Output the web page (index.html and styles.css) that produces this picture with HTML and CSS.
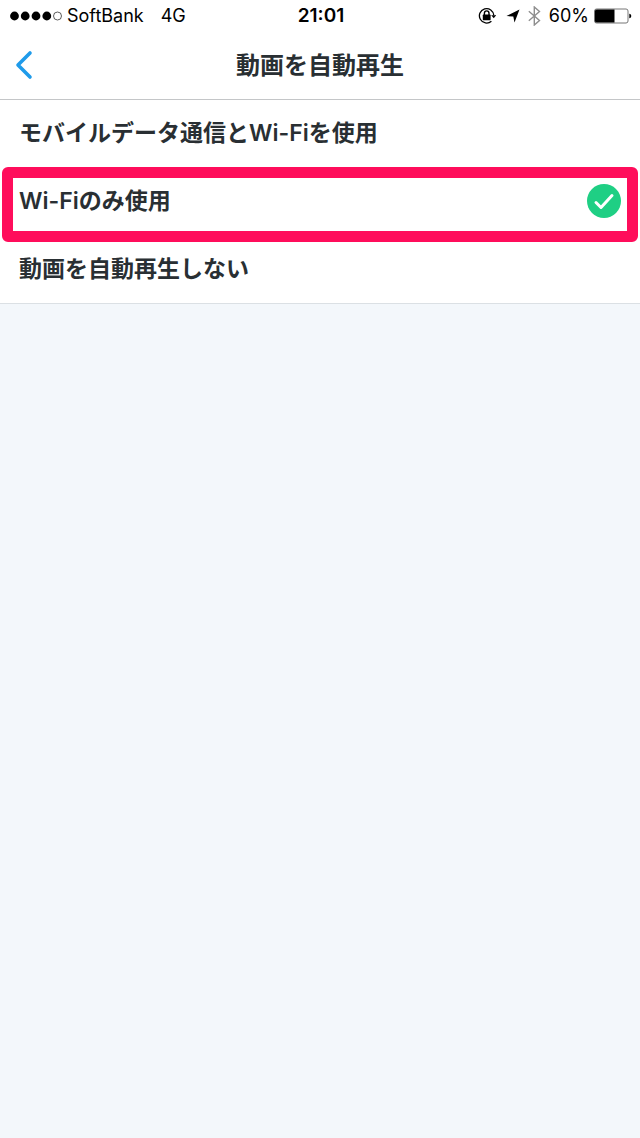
FILE: index.html
```html
<!DOCTYPE html>
<html lang="ja">
<head>
    <meta charset="UTF-8">
    <meta name="viewport" content="width=device-width">
    <title>動画を自動再生</title>
    <link rel="stylesheet" href="styles.css">
</head>
<body>
<div class="status-bar">
    <div class="status-left">
        <svg class="signal" width="52" height="10" viewBox="0 0 52 10">
            <circle cx="4.5" cy="5" r="4.4"/>
            <circle cx="15.2" cy="5" r="4.4"/>
            <circle cx="26" cy="5" r="4.4"/>
            <circle cx="36.8" cy="5" r="4.4"/>
            <circle cx="47.5" cy="5" r="4" fill="none" stroke="#333" stroke-width=".8"/>
        </svg>
        <span class="carrier">SoftBank</span>
        <span>4G</span>
    </div>
    <div class="time">21:01</div>
    <div class="status-right">
        <svg class="lock" width="18" height="18" viewBox="0 0 18 18">
            <path d="M13.4 14.2A7.2 7.2 0 1 1 15.8 8.400" fill="none" stroke="#000" stroke-width="1.3"/>
            <path d="M13.200 8.200h5l-2.500 3z"/>
            <rect x="4.800" y="7.600" width="7.800" height="5.600" rx=".6"/>
            <path d="M6.400 8.200V6.200a2.300 2.300 0 0 1 4.600 0v2" fill="none" stroke="#000" stroke-width="1.4"/>
        </svg>
        <svg class="location" width="14" height="14" viewBox="0 0 14 14">
            <path d="M13.500.5 8.500 13.500 7.300 7.600.5 7z"/>
        </svg>
        <svg class="bluetooth" width="13" height="20" viewBox="0 0 13 20">
            <path d="M.8 5.300 11.500 14.400 6.300 19V1l5.200 4.600L.8 14.700" fill="none" stroke="#8e8e8e" stroke-width="1.4"/>
        </svg>
        <span>60%</span>
        <svg class="battery" width="38" height="16" viewBox="0 0 38 16">
            <rect x=".5" y="1" width="33.5" height="14" rx="2" fill="#fff" stroke="#777"/>
            <path d="M2.500 1.500H20.500v13H2.500a1.500 1.500 0 0 1-1.500-1.500V3a1.500 1.500 0 0 1 1.500-1.500z"/>
            <path d="M35.300 5.700c2.600.5 2.600 4.100 0 4.600z"/>
        </svg>
    </div>
</div>
<header class="nav">
    <button class="back" type="button" aria-label="戻る">
        <svg width="18" height="30" viewBox="0 0 18 30">
            <path d="M15 3 3 15l12 12" fill="none" stroke="#1f9bea" stroke-width="3.6" stroke-linecap="round" stroke-linejoin="round"/>
        </svg>
    </button>
    <h1>動画を自動再生</h1>
</header>
<main class="options">
    <label class="option">
        <span>モバイルデータ通信とWi-Fiを使用</span>
        <span class="check">
            <input type="radio" name="autoplay" value="all">
            <svg width="34" height="34" viewBox="0 0 34 34"><path d="m9 18.500 5 5L25 11.500"/></svg>
        </span>
    </label>
    <label class="option marked">
        <span>Wi-Fiのみ使用</span>
        <span class="check">
            <input type="radio" name="autoplay" value="wifi" checked>
            <svg width="34" height="34" viewBox="0 0 34 34"><path d="m9 18.500 5 5L25 11.500"/></svg>
        </span>
    </label>
    <label class="option">
        <span>動画を自動再生しない</span>
        <span class="check">
            <input type="radio" name="autoplay" value="off">
            <svg width="34" height="34" viewBox="0 0 34 34"><path d="m9 18.500 5 5L25 11.500"/></svg>
        </span>
    </label>
</main>
</body>
</html>
```
FILE: styles.css
```css
*{
    box-sizing: border-box;
}
body{
    margin: 0;
    background-color: #f3f7fb;
    color: #292f33;
    font-family: Inter, "Noto Sans CJK JP", sans-serif;
}
svg{
    display: block;
    flex: none;
}
.status-bar{
    display: grid;
    grid-template-columns: 1fr auto 1fr;
    align-items: center;
    height: 32px;
    padding: 0 8px 0 10px;
    background-color: #fff;
    color: #000;
    font-size: 18px;
    line-height: 32px;
}
.status-left,
.status-right{
    display: flex;
    align-items: center;
}
.status-right{
    justify-content: flex-end;
}
.carrier{
    margin: 0 17px 0 5px;
}
.time{
    font-size: 19px;
    font-weight: 600;
}
.location{
    margin: 0 8px 0 10px;
}
.bluetooth{
    margin-right: 8px;
}
.battery{
    margin-left: 5px;
}
.nav{
    display: grid;
    grid-template-columns: 48px 1fr 48px;
    align-items: center;
    height: 67px;
    background-color: #fff;
}
.back{
    display: flex;
    padding: 0 0 2px 15px;
    border: 0;
    background: none;
    cursor: pointer;
}
.nav h1{
    margin: 0;
    font-size: 24px;
    font-weight: 600;
    line-height: 36px;
    text-align: center;
}
.options{
    background-color: #fff;
    border-bottom: 1px solid #dbe0e4;
    box-shadow: inset 0 1px #c4c6c8;
}
.option{
    display: flex;
    align-items: center;
    justify-content: space-between;
    position: relative;
    height: 68px;
    padding: 0 19px;
    font-size: 23px;
    font-weight: 600;
    line-height: 34px;
    cursor: pointer;
}
.check{
    display: grid;
}
.check input,
.check svg{
    grid-area: 1 / 1;
}
.check input{
    appearance: none;
    width: 34px;
    height: 34px;
    margin: 0;
    border-radius: 50%;
}
.check input:checked{
    background-color: #1fcf84;
}
.check svg{
    z-index: 1;
    visibility: hidden;
    fill: none;
    stroke: #fff;
    stroke-width: 3;
    stroke-linecap: round;
    stroke-linejoin: round;
}
.check input:checked + svg{
    visibility: visible;
}
/* 選択中の行を囲む枠 */
.marked::after{
    content: "";
    position: absolute;
    top: 0;
    right: 2px;
    bottom: -7px;
    left: 2px;
    border: 11px solid #ff0d5b;
    border-radius: 6px;
    pointer-events: none;
}
```
